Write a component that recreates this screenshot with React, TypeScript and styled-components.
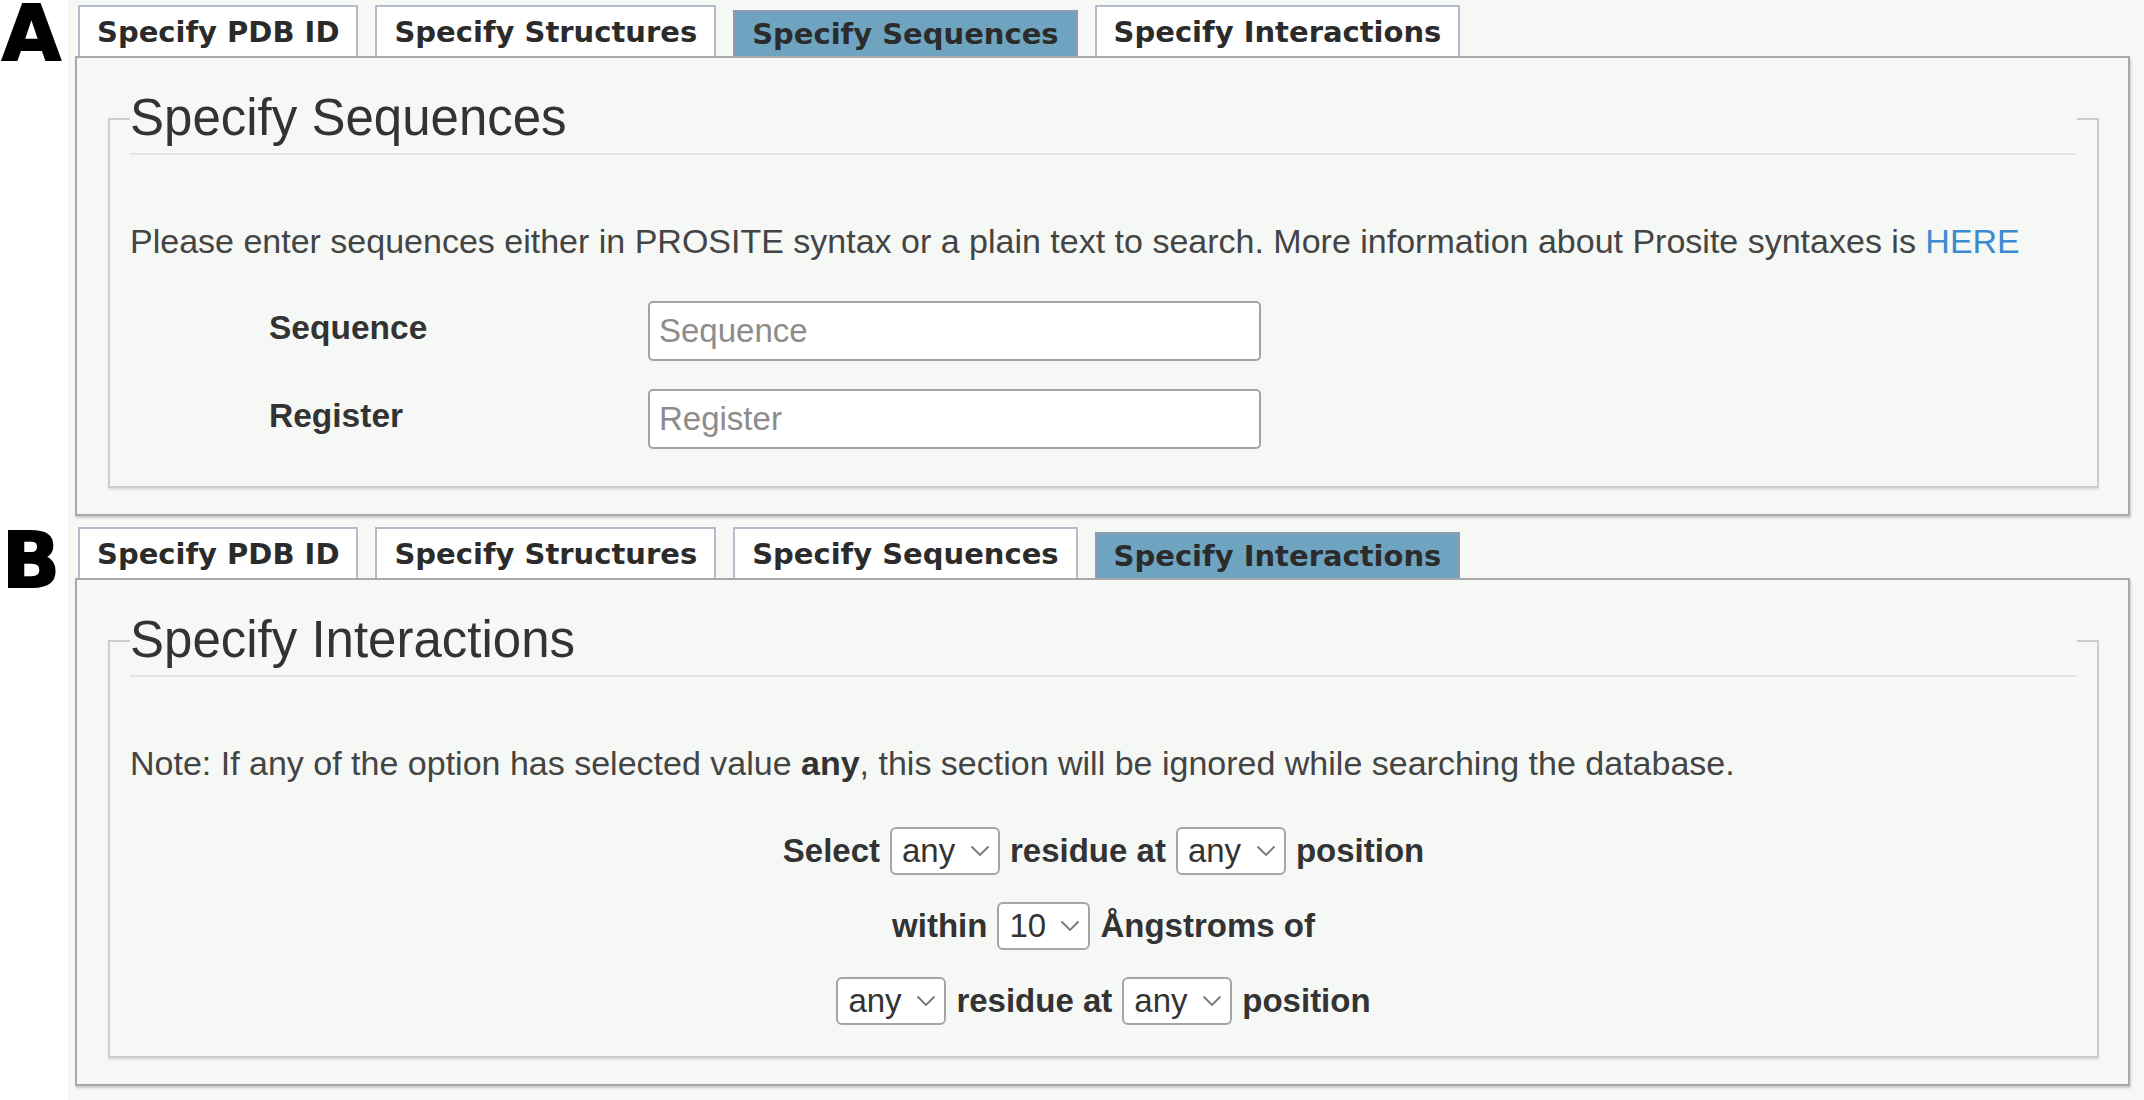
import React from "react";
import styled, { createGlobalStyle } from "styled-components";

const GlobalStyle = createGlobalStyle`
  html, body {
    margin: 0;
    padding: 0;
    background: #ffffff;
  }
  body {
    font-family: "Liberation Sans", Arial, sans-serif;
    color: #333333;
  }
`;

const Page = styled.div`
  min-height: 100vh;
  box-sizing: border-box;
  padding-top: 5px;
  display: flex;
  flex-direction: column;
  gap: 11px;
  background: linear-gradient(to right, #ffffff 68px, #f6f8f5 68px);
`;

const Figure = styled.section`
  display: grid;
  grid-template-columns: 68px 1fr;
  align-items: start;
`;

const Letter = styled.div<{ $shift: number }>`
  margin-top: ${(p) => p.$shift}px;
  padding-left: 2px;
  font-family: "DejaVu Sans", "Liberation Sans", sans-serif;
  font-weight: 700;
  font-size: 76px;
  line-height: 60px;
  color: #000000;
  -webkit-text-stroke: 2px #000000;
`;

const Shot = styled.div`
  display: flex;
  flex-direction: column;
`;

const TabBar = styled.div`
  display: flex;
  align-items: flex-end;
  gap: 17px;
  padding-left: 10px;
  height: 51px;
`;

const Tab = styled.div<{ $active?: boolean }>`
  box-sizing: border-box;
  height: ${(p) => (p.$active ? 46 : 51)}px;
  padding: 0 17px;
  display: flex;
  align-items: center;
  border: 2px solid ${(p) => (p.$active ? "#8e9bb0" : "#b6bacb")};
  border-bottom: none;
  background: ${(p) => (p.$active ? "#6ea4c0" : "#ffffff")};
  font-family: "DejaVu Sans", Verdana, sans-serif;
  font-weight: 700;
  font-size: 29px;
  color: #2b2b2b;
  white-space: nowrap;
`;

const Panel = styled.div`
  margin: 0 14px 0 7px;
  padding: 25px 29px 26px 31px;
  border: 2px solid #a9a9a9;
  box-shadow: 1px 2px 2px rgba(0, 0, 0, 0.18);
  background: #f6f8f5;
`;

const Fieldset = styled.fieldset`
  margin: 0;
  padding: 0 20px;
  min-width: 0;
  border: 2px solid #cdcdcd;
  box-shadow: 0 2px 1px rgba(0, 0, 0, 0.08);
`;

const Legend = styled.legend`
  width: 100%;
  padding: 0;
  font-size: 51px;
  line-height: 70px;
  color: #333333;
  border-bottom: 2px solid #e4e6e4;
`;

const Intro = styled.p<{ $after: number }>`
  margin: 63px 0 ${(p) => p.$after}px;
  font-size: 34px;
  line-height: 46px;
  color: #444444;
  white-space: nowrap;

  b {
    color: #333333;
  }
`;

const Link = styled.a`
  color: #3c8bcf;
  text-decoration: none;
`;

const FormGrid = styled.div`
  display: grid;
  grid-template-columns: 379px 613px;
  row-gap: 28px;
  padding-left: 139px;
  margin-bottom: 37px;
  align-items: center;
`;

const Label = styled.label`
  font-size: 33.5px;
  font-weight: 700;
  color: #333333;
  margin-top: -6px;
`;

const TextInput = styled.input`
  box-sizing: border-box;
  height: 60px;
  width: 100%;
  padding: 0 9px;
  border: 2px solid #a3a3a3;
  border-radius: 5px;
  background: #ffffff;
  font-family: "Liberation Sans", Arial, sans-serif;
  font-size: 33px;
  color: #333333;
  outline: none;

  &::placeholder {
    color: #8c8c8c;
  }
`;

const Rows = styled.div`
  display: flex;
  flex-direction: column;
  align-items: center;
  margin: 27px 0 18px;
`;

const Row = styled.div`
  height: 75px;
  display: flex;
  align-items: center;
  gap: 10px;
  font-size: 33px;
  font-weight: 700;
  color: #333333;
  white-space: nowrap;
`;

const SelectWrap = styled.span`
  position: relative;
  display: inline-flex;
`;

const Select = styled.select`
  appearance: none;
  -webkit-appearance: none;
  box-sizing: border-box;
  height: 48px;
  padding: 0 42px 0 10px;
  border: 2px solid #a5a5a5;
  border-radius: 6px;
  background: #ffffff;
  font-family: "Liberation Sans", Arial, sans-serif;
  font-size: 33px;
  font-weight: 400;
  color: #333333;
  outline: none;
`;

const Chevron = styled.svg`
  position: absolute;
  right: 10px;
  top: 50%;
  transform: translateY(-50%);
  pointer-events: none;
`;

const Dropdown = ({ value }: { value: string }) => (
  <SelectWrap>
    <Select defaultValue={value}>
      <option>{value}</option>
    </Select>
    <Chevron width="20" height="12" viewBox="0 0 20 12">
      <path d="M1.5 1.5 L10 10 L18.5 1.5" fill="none" stroke="#777" strokeWidth="1.8" />
    </Chevron>
  </SelectWrap>
);

const tabs = ["Specify PDB ID", "Specify Structures", "Specify Sequences", "Specify Interactions"];

const Tabs = ({ active }: { active: string }) => (
  <TabBar>
    {tabs.map((t) => (
      <Tab key={t} $active={t === active}>
        {t}
      </Tab>
    ))}
  </TabBar>
);

const App = () => {
  return (
    <Page>
      <GlobalStyle />
      <Figure>
        <Letter $shift={-1}>A</Letter>
        <Shot>
          <Tabs active="Specify Sequences" />
          <Panel>
            <Fieldset>
              <Legend>Specify Sequences</Legend>
              <Intro $after={37}>
                Please enter sequences either in PROSITE syntax or a plain text to search. More
                information about Prosite syntaxes is <Link href="#">HERE</Link>
              </Intro>
              <FormGrid>
                <Label htmlFor="seq">Sequence</Label>
                <TextInput id="seq" placeholder="Sequence" />
                <Label htmlFor="reg">Register</Label>
                <TextInput id="reg" placeholder="Register" />
              </FormGrid>
            </Fieldset>
          </Panel>
        </Shot>
      </Figure>
      <Figure>
        <Letter $shift={4}>B</Letter>
        <Shot>
          <Tabs active="Specify Interactions" />
          <Panel>
            <Fieldset>
              <Legend>Specify Interactions</Legend>
              <Intro $after={0}>
                Note: If any of the option has selected value <b>any</b>, this section will be
                ignored while searching the database.
              </Intro>
              <Rows>
                <Row>
                  Select <Dropdown value="any" /> residue at <Dropdown value="any" /> position
                </Row>
                <Row>
                  within <Dropdown value="10" /> Ångstroms of
                </Row>
                <Row>
                  <Dropdown value="any" /> residue at <Dropdown value="any" /> position
                </Row>
              </Rows>
            </Fieldset>
          </Panel>
        </Shot>
      </Figure>
    </Page>
  );
};

export default App;
